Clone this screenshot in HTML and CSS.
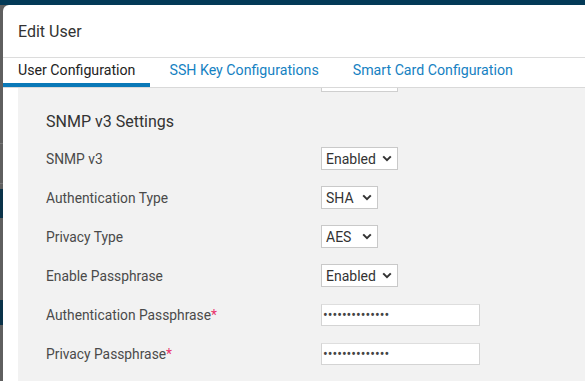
FILE: index.html
```html
<!DOCTYPE html>
<html lang="en">
<head>
    <meta charset="UTF-8">
    <meta name="viewport" content="width=device-width, initial-scale=1.0">
    <title>Edit User</title>
    <link rel="stylesheet" href="styles.css">
</head>
<body>

<div class="topbar"></div>

<div class="page">
    <!-- what is left visible of the page behind the dialog -->
    <div class="behind">
        <div class="behind-line line-1"></div>
        <div class="behind-line line-2"></div>
        <div class="behind-band band-1"></div>
        <div class="behind-band band-2"></div>
    </div>

    <div class="modal">
        <div class="modal-header">
            <h1>Edit User</h1>
        </div>

        <nav class="tabs">
            <a href="#" class="tab active">User Configuration</a>
            <a href="#" class="tab">SSH Key Configurations</a>
            <a href="#" class="tab">Smart Card Configuration</a>
        </nav>

        <div class="modal-body">
            <div class="panel">
                <div class="form-row stub-row">
                    <span></span>
                    <div class="field-stub"></div>
                </div>

                <h2>SNMP v3 Settings</h2>

                <div class="form-row">
                    <label for="snmpv3">SNMP v3</label>
                    <select id="snmpv3" class="select select-wide">
                        <option>Enabled</option>
                        <option>Disabled</option>
                    </select>
                </div>
                <div class="form-row">
                    <label for="authType">Authentication Type</label>
                    <select id="authType" class="select select-narrow">
                        <option>SHA</option>
                        <option>MD5</option>
                    </select>
                </div>
                <div class="form-row">
                    <label for="privType">Privacy Type</label>
                    <select id="privType" class="select select-narrow">
                        <option>AES</option>
                        <option>DES</option>
                    </select>
                </div>
                <div class="form-row">
                    <label for="enablePass">Enable Passphrase</label>
                    <select id="enablePass" class="select select-wide">
                        <option>Enabled</option>
                        <option>Disabled</option>
                    </select>
                </div>
                <div class="form-row">
                    <label for="authPass">Authentication Passphrase<span class="required">*</span></label>
                    <input type="password" id="authPass" class="text-input" value="secretpassword">
                </div>
                <div class="form-row">
                    <label for="privPass">Privacy Passphrase<span class="required">*</span></label>
                    <input type="password" id="privPass" class="text-input" value="secretpassword">
                </div>
            </div>
        </div>
    </div>
</div>

</body>
</html>
```

FILE: styles.css
```css
/* Global Styles */
* {
    box-sizing: border-box;
    margin: 0;
    padding: 0;
    font-family: Roboto, 'Liberation Sans', sans-serif;
}
html, body {
    height: 100%;
    overflow: hidden;
}
body {
    background-color: #5f5f5f;
    color: #333;
    display: flex;
    flex-direction: column;
}
a {
    text-decoration: none;
    color: inherit;
}

/* Page behind the dialog */
.topbar {
    height: 5px;
    background-color: #033a57;
    flex: none;
}
.page {
    flex: 1;
    display: flex;
    min-height: 0;
}
.behind {
    width: 3px;
    flex: none;
    position: relative;
    background-color: #5f5f5f;
}
.behind-line {
    position: absolute;
    left: 0;
    width: 3px;
    height: 1px;
    background-color: #777;
}
.line-1 { top: 138px; }
.line-2 { top: 178px; }
.behind-band {
    position: absolute;
    left: 0;
    width: 3px;
    background-color: #0b3349;
}
.band-1 { top: 184px; height: 29px; }
.band-2 { top: 295px; height: 25px; }

/* Dialog */
.modal {
    flex: 1;
    background-color: #fff;
    border-top-left-radius: 6px;
    display: flex;
    flex-direction: column;
    min-width: 0;
}
.modal-header {
    height: 53px;
    padding: 0 15px;
    display: flex;
    align-items: center;
    border-bottom: 1px solid #dcdcdc;
}
.modal-header h1 {
    font-size: 16px;
    font-weight: 400;
    color: #333;
}

/* Tabs */
.tabs {
    display: flex;
    height: 30px;
    border-bottom: 1px solid #d9d9d9;
}
.tab {
    display: flex;
    align-items: center;
    padding: 0 15px 2px;
    margin-right: 4px;
    font-size: 14.2px;
    color: #1581c2;
    border-bottom: 4px solid transparent;
}
.tab.active {
    color: #222;
    border-bottom-color: #0a79b8;
}

/* Body */
.modal-body {
    flex: 1;
    padding-left: 15px;
    min-height: 0;
}
.panel {
    background-color: #f2f2f2;
    height: 100%;
    padding-left: 28px;
}
.form-row {
    display: grid;
    grid-template-columns: 275px auto;
    align-items: center;
    justify-items: start;
    height: 39px;
}
.stub-row {
    height: 4px;
    align-items: start;
}
.field-stub {
    width: 77px;
    height: 4px;
    background-color: #fff;
    border: 1px solid #cfcfcf;
    border-top: none;
}
h2 {
    font-size: 16px;
    font-weight: 400;
    color: #333;
    line-height: 20px;
    margin: 20px 0 7px;
}
label {
    font-size: 13.8px;
    color: #4a4a4a;
}
.required {
    color: #e8336c;
}

/* Controls */
.select {
    appearance: none;
    -webkit-appearance: none;
    height: 23px;
    padding: 0 0 0 4px;
    font-size: 14px;
    color: #333;
    background-color: #fff;
    border: 1px solid #c9c9c9;
    border-radius: 0;
    background-image: url("data:image/svg+xml,%3Csvg xmlns='http://www.w3.org/2000/svg' width='10' height='7' viewBox='0 0 10 7'%3E%3Cpath d='M1.2 1.4 5 5.2 8.8 1.4' fill='none' stroke='%23333' stroke-width='2'/%3E%3C/svg%3E");
    background-repeat: no-repeat;
    background-position: right 5px center;
}
.select-wide {
    width: 77px;
}
.select-narrow {
    width: 57px;
}
.text-input {
    width: 159px;
    height: 22px;
    padding: 0 1px;
    font-size: 14px;
    color: #444;
    background-color: #fff;
    border: 1px solid #d4d4d4;
    border-top-color: #dedede;
    border-radius: 0;
}
```
